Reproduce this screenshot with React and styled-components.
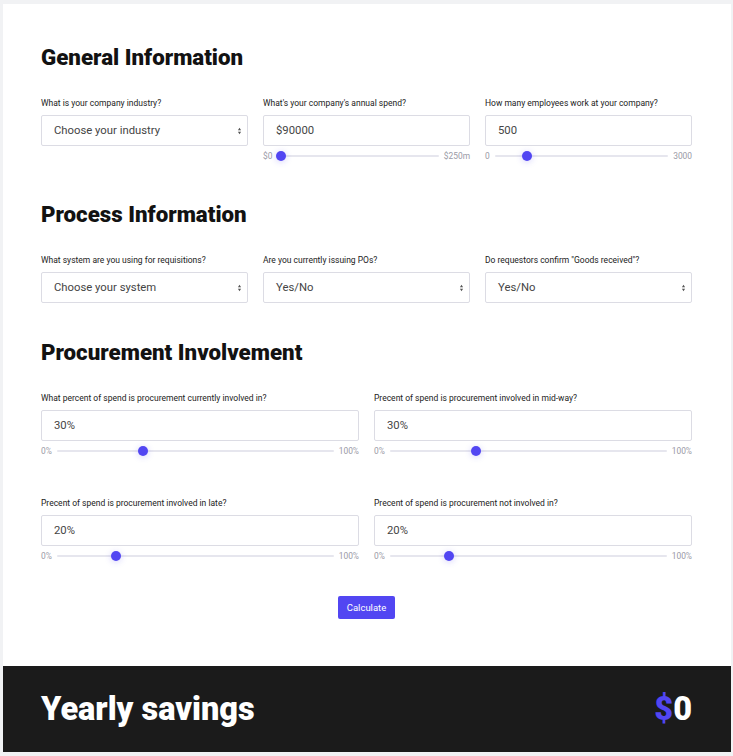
import React from 'react';
import styled, { createGlobalStyle } from 'styled-components';

const accent = '#5246f2';

const GlobalStyle = createGlobalStyle`
  html, body {
    margin: 0;
    padding: 0;
    background: #f1f2f4;
  }
  * { box-sizing: border-box; }
`;

const general = [
  { label: 'What is your company industry?', kind: 'select', value: 'Choose your industry' },
  { label: "What's your company's annual spend?", kind: 'range', value: '$90000', min: '$0', max: '$250m', pct: 0.02 },
  { label: 'How many employees work at your company?', kind: 'range', value: '500', min: '0', max: '3000', pct: 0.185 },
];

const process = [
  { label: 'What system are you using for requisitions?', kind: 'select', value: 'Choose your system' },
  { label: 'Are you currently issuing POs?', kind: 'select', value: 'Yes/No' },
  { label: 'Do requestors confirm "Goods received"?', kind: 'select', value: 'Yes/No' },
];

const procurement = [
  { label: 'What percent of spend is procurement currently involved in?', kind: 'range', value: '30%', min: '0%', max: '100%', pct: 0.31 },
  { label: 'Precent of spend is procurement involved in mid-way?', kind: 'range', value: '30%', min: '0%', max: '100%', pct: 0.31 },
  { label: 'Precent of spend is procurement involved in late?', kind: 'range', value: '20%', min: '0%', max: '100%', pct: 0.213 },
  { label: 'Precent of spend is procurement not involved in?', kind: 'range', value: '20%', min: '0%', max: '100%', pct: 0.213 },
];

const Field = ({ item }) => (
  <FieldBox>
    <Label>{item.label}</Label>
    <InputBox>
      {item.value}
      {item.kind === 'select' && (
        <Arrows viewBox="0 0 6 10">
          <path d="M3 1 L5 4 H1 Z M3 9 L5 6 H1 Z" fill="#555" />
        </Arrows>
      )}
    </InputBox>
    {item.kind === 'range' && (
      <SliderRow>
        <RangeText>{item.min}</RangeText>
        <Track>
          <Thumb style={{ left: `calc(${item.pct * 100}% - 5px)` }} />
        </Track>
        <RangeText>{item.max}</RangeText>
      </SliderRow>
    )}
  </FieldBox>
);

export default function App() {
  return (
    <Page>
      <GlobalStyle />
      <Card>
        <Section>
          <Heading>General Information</Heading>
          <Grid cols={3}>
            {general.map((f) => <Field key={f.label} item={f} />)}
          </Grid>
        </Section>
        <Section gap={35}>
          <Heading>Process Information</Heading>
          <Grid cols={3}>
            {process.map((f) => <Field key={f.label} item={f} />)}
          </Grid>
        </Section>
        <Section>
          <Heading>Procurement Involvement</Heading>
          <Grid cols={2} rowGap={36}>
            {procurement.map((f) => <Field key={f.label} item={f} />)}
          </Grid>
        </Section>
        <ButtonRow>
          <Button>Calculate</Button>
        </ButtonRow>
      </Card>
      <Footer>
        <FooterTitle>Yearly savings</FooterTitle>
        <Total><Dollar>$</Dollar>0</Total>
      </Footer>
    </Page>
  );
}

const Page = styled.div`
  padding: 4px 2px 4px 3px;
  min-height: 756px;
  font-family: Roboto, "Liberation Sans", sans-serif;
`;

const Card = styled.div`
  background: #fff;
  padding: 39px 39px 47px 38px;
  display: flex;
  flex-direction: column;
`;

const Section = styled.div`
  display: flex;
  flex-direction: column;
  margin-bottom: ${(p) => p.gap || 34}px;
`;

const Heading = styled.h2`
  margin: 0 0 26px;
  font-family: Roboto, "Liberation Sans", sans-serif;
  font-weight: 900;
  font-size: 22.3px;
  line-height: 28px;
  color: #121212;
`;

const Grid = styled.div`
  display: grid;
  grid-template-columns: repeat(${(p) => p.cols}, 1fr);
  column-gap: 15px;
  row-gap: ${(p) => p.rowGap || 0}px;
`;

const FieldBox = styled.div`
  display: flex;
  flex-direction: column;
`;

const Label = styled.div`
  font-family: Roboto, "Liberation Sans", sans-serif;
  font-size: 8.5px;
  line-height: 12px;
  color: #222;
  margin-bottom: 6px;
`;

const InputBox = styled.div`
  position: relative;
  height: 31px;
  border: 1px solid #dcdce4;
  border-radius: 2px;
  padding: 0 12px;
  display: flex;
  align-items: center;
  font-size: 11.3px;
  color: #444;
`;

const Arrows = styled.svg`
  position: absolute;
  right: 5px;
  top: 11px;
  width: 5px;
  height: 8px;
`;

const SliderRow = styled.div`
  display: flex;
  align-items: center;
  gap: 5px;
  height: 20px;
`;

const RangeText = styled.span`
  font-family: Roboto, "Liberation Sans", sans-serif;
  font-size: 8.4px;
  color: #9a9aa6;
`;

const Track = styled.div`
  position: relative;
  flex: 1;
  height: 2px;
  background: #e6e6ee;
  border-radius: 1px;
`;

const Thumb = styled.div`
  position: absolute;
  top: -4px;
  width: 10px;
  height: 10px;
  border-radius: 50%;
  background: ${accent};
  box-shadow: 0 1px 6px rgba(82, 70, 242, 0.25);
`;

const ButtonRow = styled.div`
  display: flex;
  justify-content: center;
  margin-top: -4px;
`;

const Button = styled.button`
  border: none;
  background: ${accent};
  color: #fff;
  font-family: Roboto, "Liberation Sans", sans-serif;
  font-size: 9.5px;
  padding: 0 9px;
  height: 23px;
  border-radius: 2px;
`;

const Footer = styled.div`
  background: #1b1b1b;
  height: 86px;
  padding: 0 39px 0 38px;
  display: flex;
  align-items: center;
  justify-content: space-between;
`;

const FooterTitle = styled.div`
  font-weight: 900;
  font-size: 32.5px;
  color: #fff;
`;

const Total = styled.div`
  font-weight: 900;
  font-size: 32.5px;
  color: #fff;
`;

const Dollar = styled.span`
  color: ${accent};
`;
